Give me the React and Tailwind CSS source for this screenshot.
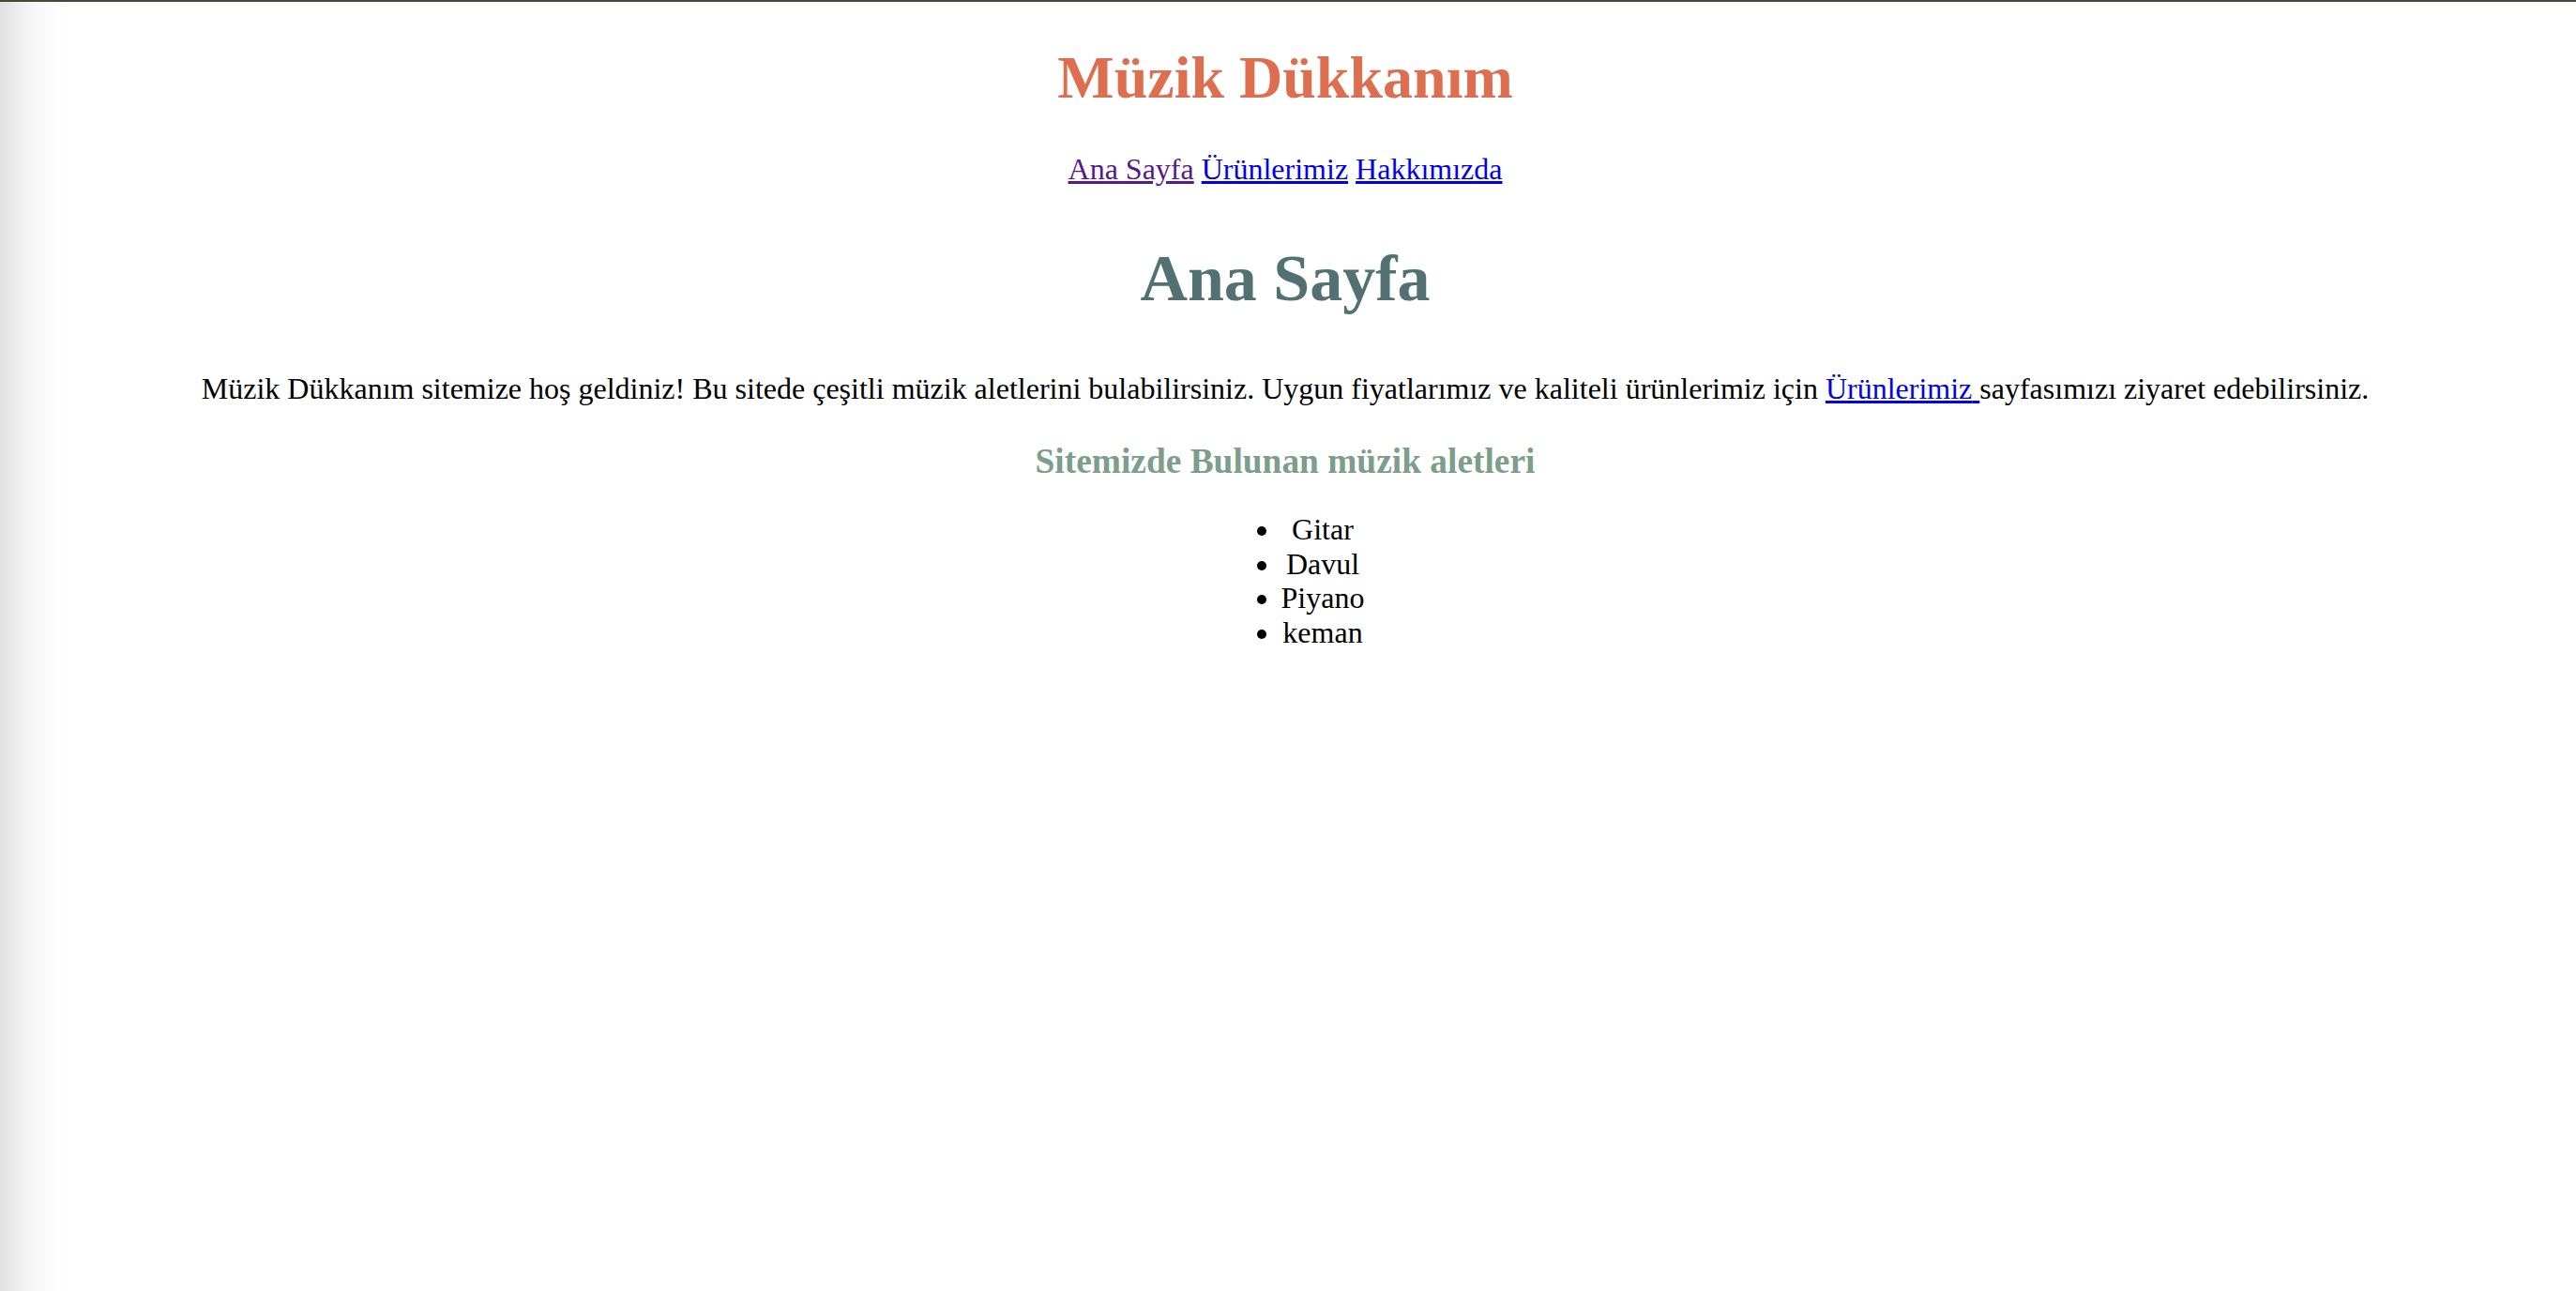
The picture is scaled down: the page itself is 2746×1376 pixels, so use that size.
import React from "react";

const instruments = ["Gitar", "Davul", "Piyano", "keman"];

function App() {
  return (
    <div className="relative min-h-screen w-full overflow-hidden border-t-2 border-[#48443e] bg-white">
      <div className="pointer-events-none absolute inset-y-0 left-0 w-[70px] bg-linear-to-r from-[#e0e0e0] via-[#f7f7f7] to-white" />
      <div className="relative pl-[13px] pr-[19px] text-center font-['Liberation_Serif',serif] text-[32px] leading-[1.15] text-black">
        <h1 className="mt-[44px] mb-[42px] text-[64px] font-bold text-[#dd6e50]">
          Müzik Dükkanım
        </h1>
        <nav className="my-[32px]">
          <a href="#" className="text-[#551a8b] underline">
            Ana Sayfa
          </a>{" "}
          <a href="#" className="text-[#0000ee] underline">
            Ürünlerimiz
          </a>{" "}
          <a href="#" className="text-[#0000ee] underline">
            Hakkımızda
          </a>
        </nav>
        <h2 className="mt-[59px] mb-[58px] text-[70px] font-bold text-[#537172]">
          Ana Sayfa
        </h2>
        <p>
          Müzik Dükkanım sitemize hoş geldiniz! Bu sitede çeşitli müzik aletlerini bulabilirsiniz. Uygun fiyatlarımız ve kaliteli ürünlerimiz için{" "}
          <a href="#" className="text-[#0000ee] underline">
            Ürünlerimiz{" "}
          </a>
          sayfasımızı ziyaret edebilirsiniz.
        </p>
        <h3 className="mt-[37px] mb-[33px] text-[37.4px] font-bold text-[#7c9e8a]">
          Sitemizde Bulunan müzik aletleri
        </h3>
        <ul className="mx-auto w-fit list-disc pl-[80px]">
          {instruments.map((item) => (
            <li key={item}>{item}</li>
          ))}
        </ul>
      </div>
    </div>
  );
}

export default App;
